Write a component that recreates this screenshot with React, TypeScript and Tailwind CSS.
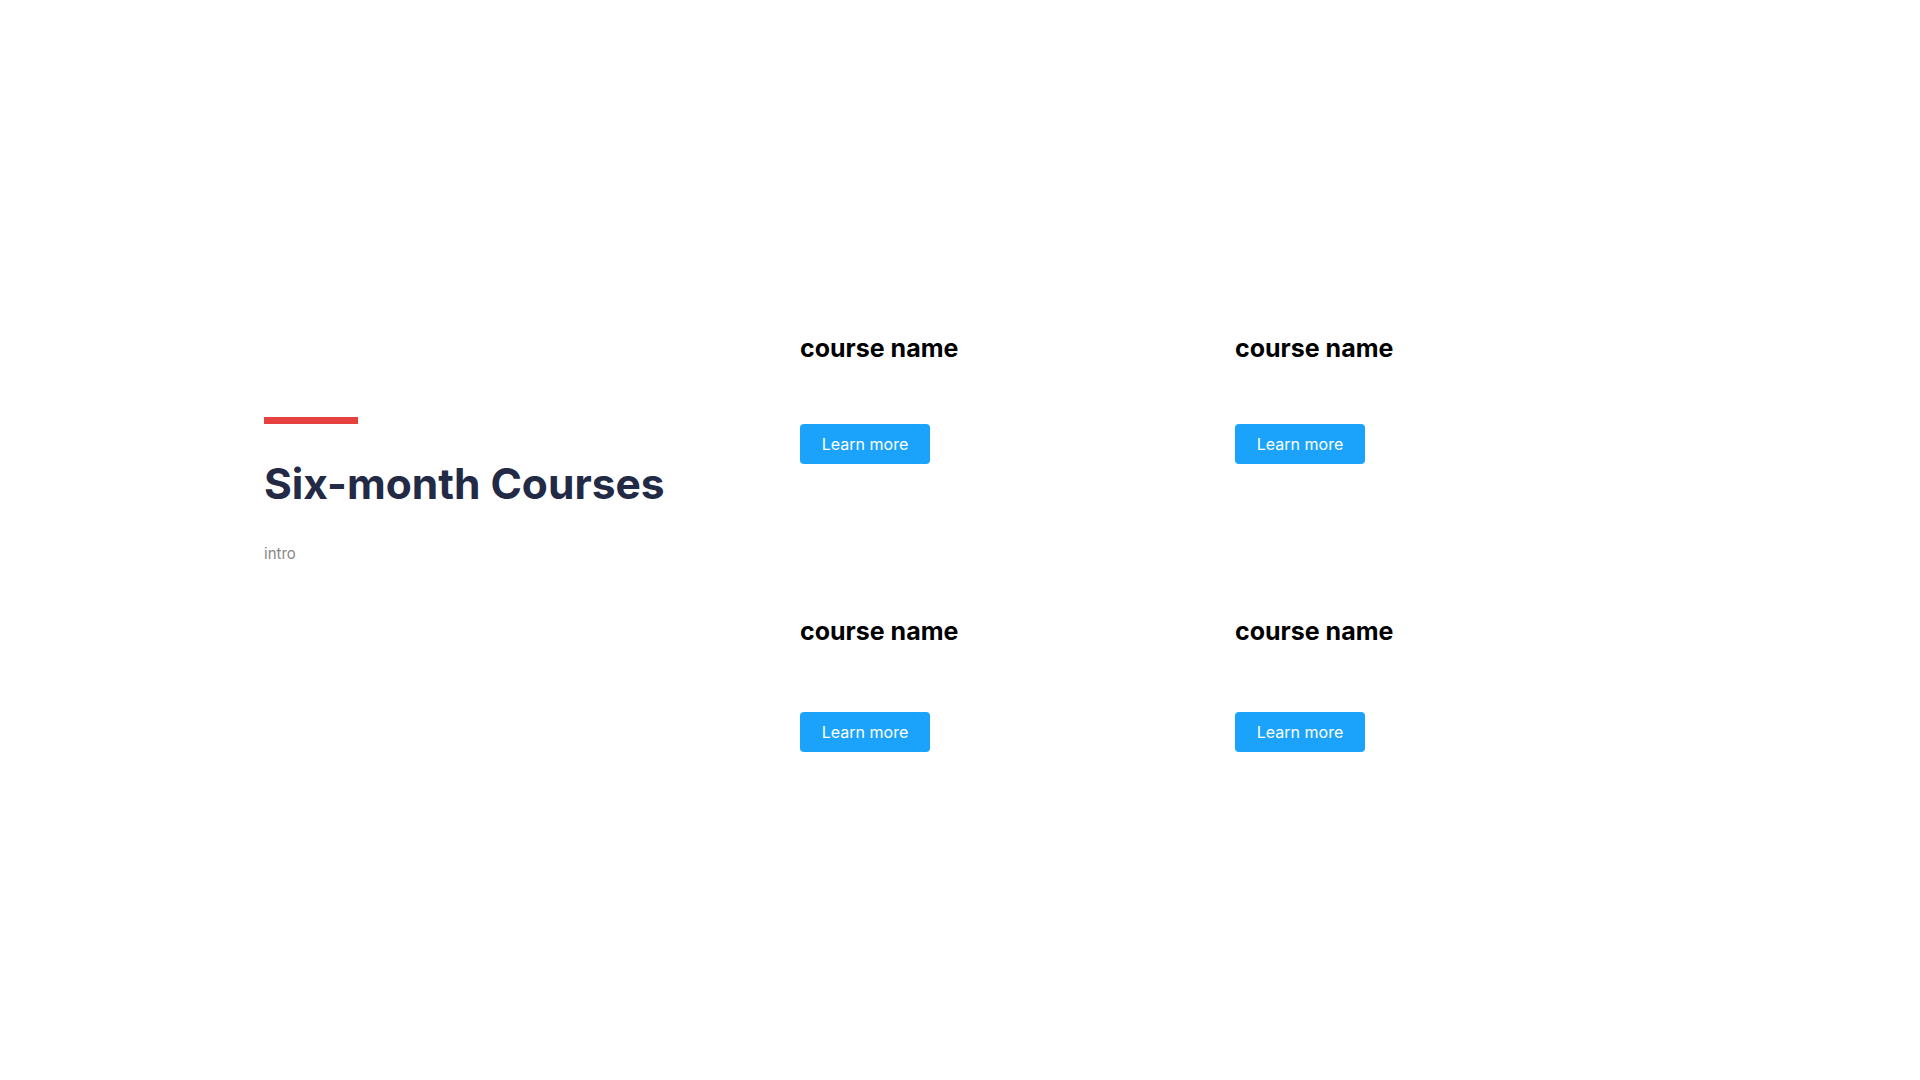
const courses = [
  { name: "course name", spacing: "mt-[61px]" },
  { name: "course name", spacing: "mt-[61px]" },
  { name: "course name", spacing: "mt-[66px]" },
  { name: "course name", spacing: "mt-[66px]" },
];

function CourseCard({ name, spacing }: { name: string; spacing: string }) {
  return (
    <div className="flex flex-col items-start">
      <h3 className="text-[25px] leading-[30px] font-bold text-black">
        {name}
      </h3>
      <button
        className={`${spacing} h-10 w-[130px] rounded-[4px] bg-[#1ba3fc] text-[16px] text-white`}
      >
        Learn more
      </button>
    </div>
  );
}

export default function App() {
  return (
    <div
      className="min-h-screen w-full bg-white"
      style={{ fontFamily: "Inter, 'Noto Sans', sans-serif" }}
    >
      <div className="flex pt-[333px] pl-[264px]">
        {/* Left: section intro */}
        <div className="w-[536px] shrink-0 pt-[84px]">
          <div className="h-[7px] w-[94px] bg-[#e5413f]" />
          <h2 className="mt-[34px] text-[42.5px] leading-[52px] font-bold text-[#222a45]">
            Six-month Courses
          </h2>
          <p className="mt-[33px] text-[15px] text-[#888888]">intro</p>
        </div>

        {/* Right: course grid */}
        <div className="grid shrink-0 grid-cols-[435px_435px] gap-y-[152px]">
          {courses.map((c, i) => (
            <CourseCard key={i} name={c.name} spacing={c.spacing} />
          ))}
        </div>
      </div>
    </div>
  );
}
